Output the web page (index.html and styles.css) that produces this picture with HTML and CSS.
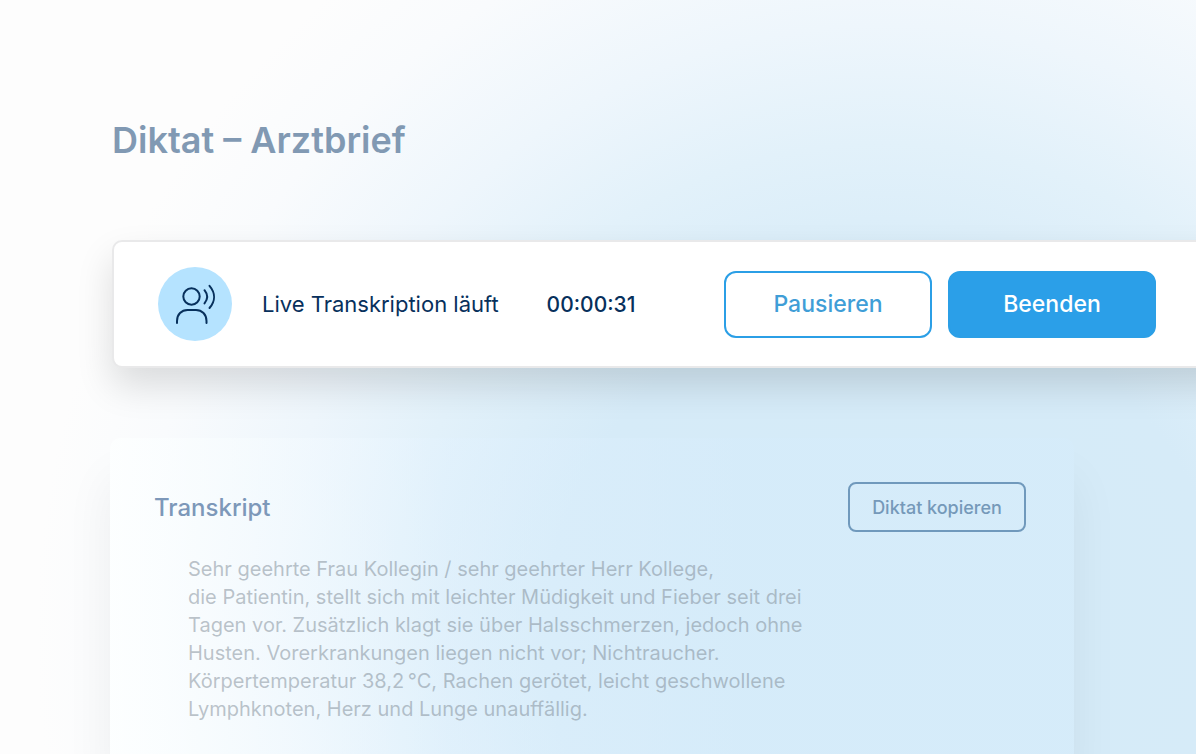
FILE: index.html
```
<!DOCTYPE html>
<html lang="de">
<head>
    <meta charset="UTF-8">
    <meta name="viewport" content="width=device-width, initial-scale=1.0">
    <title>Diktat – Arztbrief</title>
    <link rel="stylesheet" href="styles.css">
</head>
<body>
    <main class="page">
        <h1 class="page-title">Diktat – Arztbrief</h1>

        <section class="recorder">
            <div class="recorder-icon">
                <svg viewBox="0 0 74 74" aria-hidden="true">
                    <circle cx="33.5" cy="29.5" r="8.2"/>
                    <path d="M19 56v-2c0-6.500 4.500-11 10.500-11h8.500c6 0 10.500 4.500 10.500 11v2"/>
                    <path d="M46.500 23.200c3.400 4.200 3.400 9 0 13.200"/>
                    <path d="M51.500 18.800c6 7 6 15.200 0 22.200"/>
                </svg>
            </div>
            <span class="recorder-status">Live Transkription läuft</span>
            <time class="recorder-time">00:00:31</time>
            <div class="recorder-actions">
                <button type="button" class="btn pause-btn">Pausieren</button>
                <button type="button" class="btn stop-btn">Beenden</button>
            </div>
        </section>

        <section class="transcript">
            <div class="transcript-header">
                <h2>Transkript</h2>
                <button type="button" class="copy-btn">Diktat kopieren</button>
            </div>
            <p class="transcript-text">
                Sehr geehrte Frau Kollegin / sehr geehrter Herr Kollege,<br>
                die Patientin, stellt sich mit leichter Müdigkeit und Fieber seit drei<br>
                Tagen vor. Zusätzlich klagt sie über Halsschmerzen, jedoch ohne<br>
                Husten. Vorerkrankungen liegen nicht vor; Nichtraucher.<br>
                Körpertemperatur 38,2&#8201;°C, Rachen gerötet, leicht geschwollene<br>
                Lymphknoten, Herz und Lunge unauffällig.
            </p>
        </section>
    </main>
</body>
</html>
```
FILE: styles.css
```
* { box-sizing: border-box; }
body { margin: 0; font-family: "Inter", "Liberation Sans", sans-serif; color: #07305c; background: #fdfdfd; }
button { font-family: inherit; cursor: pointer; }

.page {
    display: flex;
    flex-direction: column;
    min-height: 100vh;
    padding: 116px 0 0 112px;
    overflow: hidden;
    background: radial-gradient(ellipse 71% 112% at 74% 84%, #d4ebf8 0%, #d6ebf8 40%, #e2f1fa 58%, #eef6fc 72%, #f9fbfd 88%, #fdfdfd 100%);
}
.page-title { margin: 0 0 76px; font-size: 36px; line-height: 48px; font-weight: 600; color: #8199b3; }

/* Aufnahmeleiste, läuft rechts aus dem Fenster */
.recorder {
    display: flex;
    align-items: center;
    min-height: 128px;
    margin-right: -60px;
    padding: 0 98px 0 44px;
    background: white;
    border: 2px solid #e9e9ea;
    border-radius: 10px;
    box-shadow: 0 18px 36px rgba(0,0,0,0.13);
}
.recorder-icon { width: 74px; height: 74px; flex: none; border-radius: 50%; background: #b5e3ff; }
.recorder-icon svg { display: block; width: 100%; height: 100%; fill: none; stroke: #07305c; stroke-width: 2; stroke-linecap: round; }
.recorder-status { margin-left: 30px; font-size: 22px; }
.recorder-time { margin-left: 48px; font-size: 21px; font-weight: 500; }
.recorder-actions { display: flex; gap: 16px; margin-left: auto; }
.btn { width: 208px; height: 67px; border: 2px solid #2b9fe6; border-radius: 12px; font-size: 23px; font-weight: 500; }
.pause-btn { background: white; color: #3f9ed7; }
.stop-btn { background: #2b9fe8; color: white; }

.transcript {
    flex: 1;
    margin: 70px 122px 0 -2px;
    padding: 44px 48px 31px 44px;
    border-radius: 10px 10px 0 0;
    background: linear-gradient(to right, rgba(253,255,255,0.85), rgba(226,242,254,0.4) 35%, rgba(214,236,251,0.5) 65%);
    box-shadow: 0 40px 50px rgba(0,0,0,0.06);
}
.transcript-header { display: flex; align-items: center; justify-content: space-between; }
.transcript h2 { margin: 0; font-size: 24px; font-weight: 500; color: #7d98b9; }
.copy-btn { width: 178px; height: 50px; border: 2px solid #7099bc; border-radius: 8px; background: transparent; color: #7599b9; font-size: 18px; font-weight: 500; }
.transcript-text { margin: 23px 0 0 34px; font-size: 20px; line-height: 28px; color: rgba(125,137,148,0.5); }
```
